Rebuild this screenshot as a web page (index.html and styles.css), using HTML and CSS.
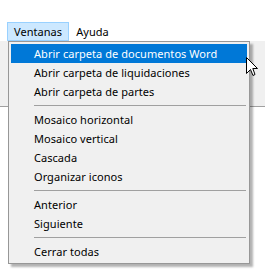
FILE: index.html
```html
<!DOCTYPE html>
<html lang="es">
<head>
  <meta charset="UTF-8" />
  <title>Ventanas</title>
  <link rel="stylesheet" href="styles.css">
</head>
<body>
  <div class="topspace"></div>

  <!-- barra de menú -->
  <div class="menubar">
    <span class="menuTitle open">Ventanas</span>
    <span class="menuTitle">Ayuda</span>
  </div>
  <div class="toolbar"></div>

  <!-- menú desplegable -->
  <ul class="dropdown">
    <li class="hover">Abrir carpeta de documentos Word</li>
    <li>Abrir carpeta de liquidaciones</li>
    <li>Abrir carpeta de partes</li>
    <li class="sep"></li>
    <li>Mosaico horizontal</li>
    <li>Mosaico vertical</li>
    <li>Cascada</li>
    <li>Organizar iconos</li>
    <li class="sep"></li>
    <li>Anterior</li>
    <li>Siguiente</li>
    <li class="sep"></li>
    <li>Cerrar todas</li>
  </ul>

  <svg class="cursor" width="13" height="21" viewBox="0 0 13 21">
    <path d="M0.5 0.5 L0.5 16.5 L4.5 12.5 L7 18.5 L9 17.5 L6.8 11.5 L11.5 11.5 Z" fill="#fff" stroke="#000" stroke-width="1" stroke-linejoin="miter"/>
  </svg>
</body>
</html>
```

FILE: styles.css
```css
body {
  margin: 0;
  background: #fff;
  font-family: "Noto Sans", "Segoe UI", sans-serif;
  font-size: 11px;
  letter-spacing: 0.05px;
  color: #000;
  position: relative;
  width: 265px;
  height: 275px;
  overflow: hidden;
}
.topspace {
  height: 22px;
}

/* barra de menú */
.menubar {
  display: flex;
  height: 19px;
  padding-left: 7px;
  background: #fff;
}
.menuTitle {
  display: flex;
  align-items: center;
  padding: 0 6px;
  border: 1px solid transparent;
}
.menuTitle.open {
  background: #cce8ff;
  border-color: #99d1ff;
}
.toolbar {
  height: 65px;
  background: #f0f0f0;
  border-bottom: 1px solid #a0a0a0;
}

/* menú desplegable */
.dropdown {
  position: absolute;
  left: 8px;
  top: 41px;
  width: 236px;
  margin: 0;
  padding: 2px;
  list-style: none;
  background: #f0f0f0;
  border: 1px solid #979797;
  box-shadow: 3px 3px 2px rgba(0, 0, 0, 0.3);
}
.dropdown li {
  height: 19px;
  line-height: 19px;
  padding-left: 23px;
  white-space: nowrap;
}
.dropdown li.hover {
  background: #0078d7;
  color: #fff;
}
.dropdown li.sep {
  height: 9px;
  padding: 0;
  margin: 0 1px 0 23px;
  display: flex;
  align-items: center;
}
.dropdown li.sep::before {
  content: "";
  flex: 1;
  border-top: 1px solid #a0a0a0;
}

.cursor {
  position: absolute;
  left: 246px;
  top: 57px;
}
```
